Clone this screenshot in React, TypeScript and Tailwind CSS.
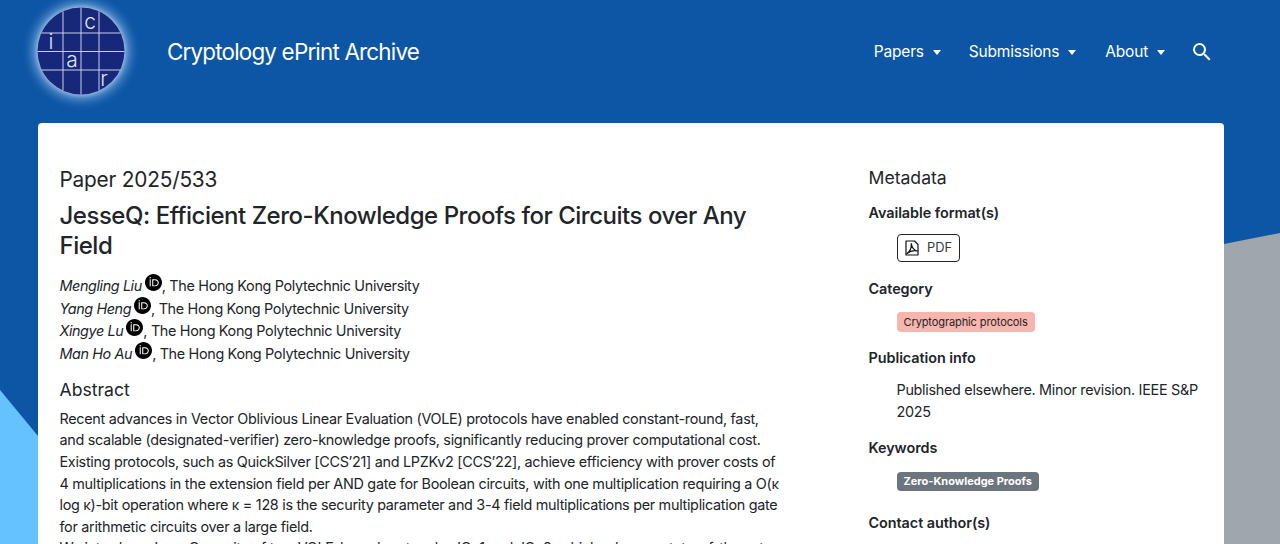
import { MdSearch } from 'react-icons/md';
import { SiOrcid } from 'react-icons/si';

const authors = [
    { name: 'Mengling Liu' },
    { name: 'Yang Heng' },
    { name: 'Xingye Lu' },
    { name: 'Man Ho Au' },
];

const abstractLines = [
    'Recent advances in Vector Oblivious Linear Evaluation (VOLE) protocols have enabled constant-round, fast,',
    'and scalable (designated-verifier) zero-knowledge proofs, significantly reducing prover computational cost.',
    'Existing protocols, such as QuickSilver [CCS’21] and LPZKv2 [CCS’22], achieve efficiency with prover costs of',
    '4 multiplications in the extension field per AND gate for Boolean circuits, with one multiplication requiring a O(κ',
    'log κ)-bit operation where κ = 128 is the security parameter and 3-4 field multiplications per multiplication gate',
    'for arithmetic circuits over a large field.',
    'We introduce JesseQ, a suite of two VOLE-based protocols: JQv1 and JQv2, which advance state-of-the-art',
];

function IacrLogo() {
    return (
        <svg width="120" height="120" viewBox="0 0 120 120" className="shrink-0 -mt-[9px] -ml-[5px]">
            <defs>
                <radialGradient id="glow">
                    <stop offset="70%" stopColor="#b9d4f0" stopOpacity="0.9" />
                    <stop offset="80%" stopColor="#6d9fd6" stopOpacity="0.55" />
                    <stop offset="100%" stopColor="#0d56a6" stopOpacity="0" />
                </radialGradient>
            </defs>
            <circle cx="60" cy="60" r="60" fill="url(#glow)" />
            <circle cx="60" cy="60" r="43.5" fill="#17287b" />
            <g stroke="#c9d0e8" strokeWidth="1">
                <line x1="42" y1="20.500" x2="42" y2="99.500" />
                <line x1="60" y1="16.500" x2="60" y2="103.500" />
                <line x1="78" y1="20.500" x2="78" y2="99.500" />
                <line x1="20.500" y1="42" x2="99.500" y2="42" />
                <line x1="16.500" y1="60.500" x2="103.500" y2="60.500" />
                <line x1="20.500" y1="79" x2="99.500" y2="79" />
            </g>
            <g fill="#dfe3f3" fontFamily="Inter, sans-serif" fontWeight="300" fontSize="21" textAnchor="middle">
                <text x="69" y="38">c</text>
                <text x="30" y="58">i</text>
                <text x="51" y="76">a</text>
                <text x="83" y="94.500">r</text>
            </g>
        </svg>
    );
}

function PdfIcon() {
    return (
        <svg width="16" height="16" viewBox="0 0 16 16" fill="none" stroke="#111" strokeWidth="1.2" strokeLinejoin="round">
            <path d="M2 1h8.500L14 4.500V15H2z" />
            <path d="M3 13.500C5.500 12 7.500 8 7.300 3.500C7.800 7.500 10 10.300 13.500 11C10 10.300 6 11 3 13.500z" />
        </svg>
    );
}

function NavItem({ label }: { label: string }) {
    return (
        <a className="flex items-center gap-[9px] text-white text-[15.5px] tracking-[-0.2px]">
            {label}
            <span className="w-0 h-0 border-x-[4.5px] border-x-transparent border-t-[5px] border-t-white" />
        </a>
    );
}

function MetaHeading({ children }: { children: string }) {
    return <h5 className="text-[14.4px] leading-[18px] font-semibold tracking-[-0.05px] text-[#212529]">{children}</h5>;
}

export default function App() {
    return (
        <div className="relative h-screen overflow-hidden bg-[#0d56a6] font-['Inter','Liberation_Sans',sans-serif] text-[#212529]">
            {/* page background shapes */}
            <svg className="absolute inset-0" width="1280" height="544" viewBox="0 0 1280 544">
                <polygon points="0,390 38,436 38,544 0,544" fill="#66c2ff" />
                <polygon points="1224,244 1280,233 1280,544 1224,544" fill="#9fa6ad" />
            </svg>

            <div className="relative">
                <header className="h-[123px] pl-[26px] pr-[66px] flex items-start">
                    <IacrLogo />
                    <span className="ml-[26px] mt-[35px] text-[22.4px] leading-[34px] tracking-[-0.8px] text-white">Cryptology ePrint Archive</span>
                    <nav className="ml-auto mt-[41px] flex items-center h-[22px]">
                        <NavItem label="Papers" />
                        <div className="w-[28px]" />
                        <NavItem label="Submissions" />
                        <div className="w-[29px]" />
                        <NavItem label="About" />
                        <MdSearch className="ml-[25px] -mt-[1px] text-white" size={24} />
                    </nav>
                </header>

                <main className="ml-[38px] w-[1186px] h-[500px] bg-white rounded-t-[4px] pl-[21.5px] flex">
                    <div className="w-[740px] pt-[43px] shrink-0">
                        <h4 className="text-[20.8px] leading-[27px] font-[420] tracking-[-0.2px]">Paper 2025/533</h4>
                        <h3 className="mt-[8px] text-[24px] leading-[30px] font-medium tracking-[-0.48px] w-[720px]">
                            JesseQ: Efficient Zero-Knowledge Proofs for Circuits over Any Field
                        </h3>
                        <div className="mt-[14px] tracking-[-0.3px]">
                            {authors.map(a => (
                                <div key={a.name} className="flex items-start h-[22.6px] text-[14.4px] leading-[22.6px]">
                                    <i className="tracking-[-0.4px]">{a.name}</i>
                                    <SiOrcid size={17} className="ml-[3px] -mt-[1px] text-black" />
                                    <span className="tracking-[-0.33px]">, The Hong Kong Polytechnic University</span>
                                </div>
                            ))}
                        </div>
                        <h5 className="mt-[13px] text-[17.6px] leading-[24px] font-[420]">Abstract</h5>
                        <div className="mt-[5.500px] text-[14.4px] leading-[21.6px] tracking-[-0.3px] whitespace-nowrap">
                            {abstractLines.map(line => (
                                <p key={line}>{line}</p>
                            ))}
                        </div>
                    </div>

                    <aside className="ml-[69px] pt-[43px] w-[335px]">
                        <h4 className="text-[17.6px] leading-[24px] font-[420]">Metadata</h4>
                        <div className="mt-[14px]">
                            <MetaHeading>Available format(s)</MetaHeading>
                            <a className="mt-[12px] ml-[28px] w-[63px] h-[28px] flex items-center justify-center gap-[7px] border border-[#212529] rounded-[4px] text-[12.8px] text-[#343a40]">
                                <PdfIcon />
                                PDF
                            </a>
                        </div>
                        <div className="mt-[18px]">
                            <MetaHeading>Category</MetaHeading>
                            <span className="inline-block mt-[14px] ml-[28px] h-[20px] px-[7px] bg-[#f7b5ae] rounded-[4px] text-[11px] leading-[20px] tracking-[-0.1px] text-[#212529]">
                                Cryptographic protocols
                            </span>
                        </div>
                        <div className="mt-[17px]">
                            <MetaHeading>Publication info</MetaHeading>
                            <p className="mt-[12px] ml-[28px] text-[14.4px] leading-[21.6px] tracking-[-0.3px]">
                                Published elsewhere. Minor revision. IEEE S&amp;P 2025
                            </p>
                        </div>
                        <div className="mt-[17px]">
                            <MetaHeading>Keywords</MetaHeading>
                            <span className="inline-block mt-[15px] ml-[28px] h-[19px] px-[7px] bg-[#6c757d] rounded-[4px] text-[11px] font-bold leading-[19px] text-white">
                                Zero-Knowledge Proofs
                            </span>
                        </div>
                        <div className="mt-[23px]">
                            <MetaHeading>Contact author(s)</MetaHeading>
                        </div>
                    </aside>
                </main>
            </div>
        </div>
    );
}
